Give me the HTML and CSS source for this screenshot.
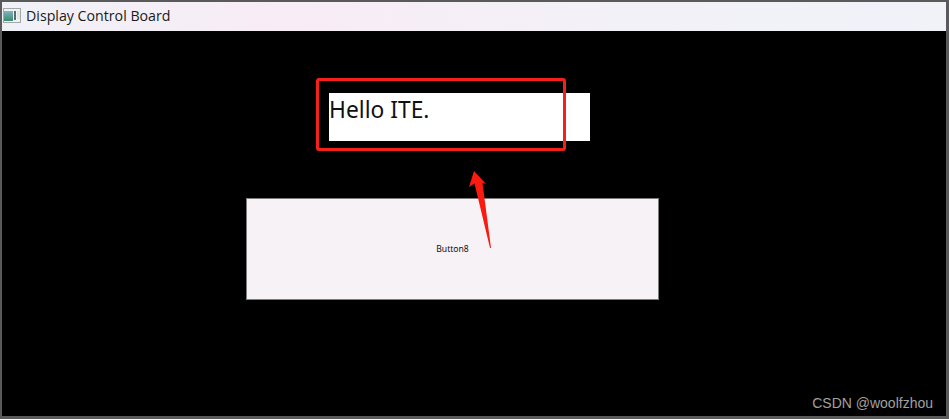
FILE: index.html
```html
<!DOCTYPE html>
<html lang="en">
<head>
<meta charset="utf-8">
<title>Display Control Board</title>
<link rel="stylesheet" href="styles.css">
</head>
<body>
<div class="window">
  <header class="titlebar">
    <svg class="app-icon" width="18" height="15" viewBox="0 0 18 15" aria-hidden="true">
      <defs>
        <linearGradient id="pane" x1="0" y1="0" x2="0" y2="1">
          <stop offset="0" stop-color="#7fb4c0"/>
          <stop offset="1" stop-color="#3a8a6e"/>
        </linearGradient>
      </defs>
      <rect x="0.5" y="0.5" width="17" height="14" fill="#f1f3f3" stroke="#a4a8ac"/>
      <rect x="1" y="3" width="9" height="10" fill="url(#pane)"/>
      <rect x="11" y="3" width="2" height="9" fill="#5a6a76"/>
      <rect x="14" y="3" width="3" height="8" fill="#dde8e6"/>
    </svg>
    <span class="title">Display Control Board</span>
  </header>
  <main class="canvas">
    <div class="label">Hello ITE.</div>
    <button class="push" type="button">Button8</button>
    <div class="mark"></div>
    <svg class="arrow" width="30" height="84" viewBox="0 0 30 84" aria-hidden="true">
      <path d="M9 3 L21 16 L17.500 15 L26 80 L25 80 L9.500 15.500 L4 19 Z" fill="#fb1a10"/>
    </svg>
    <div class="credit">CSDN @woolfzhou</div>
  </main>
</div>
</body>
</html>
```
FILE: styles.css
```css
html, body {
  margin: 0;
  padding: 0;
  height: 100%;
  overflow: hidden;
  background: #000;
}
.window {
  box-sizing: border-box;
  width: 949px;
  height: 419px;
  display: flex;
  flex-direction: column;
  border: solid #5a5a5a;
  border-width: 2px 3px 3px 2px;
  font-family: "Noto Sans", "Open Sans", sans-serif;
}
.titlebar {
  height: 29px;
  flex: none;
  display: flex;
  align-items: center;
  gap: 5px;
  padding: 0 0 1px 1px;
  box-sizing: border-box;
  background: linear-gradient(90deg, #f0f1f7 0%, #f8ecf6 30%, #f3f1f8 65%, #f0f2f8 100%);
}
.app-icon {
  flex: none;
  margin-bottom: 2px;
}
.title {
  font-family: "Open Sans", "Noto Sans", sans-serif;
  font-size: 14.200px;
  color: #1a1a1a;
  margin-bottom: 2px;
}
.canvas {
  position: relative;
  flex: 1;
  background: #000;
  display: flex;
  flex-direction: column;
  align-items: flex-start;
  padding: 62px 0 0 244px;
}
.label {
  box-sizing: border-box;
  width: 261px;
  height: 48px;
  margin-left: 83px;
  background: #fff;
  color: #111;
  font-family: "Noto Sans", sans-serif;
  font-size: 22.800px;
  line-height: 33px;
}
.push {
  box-sizing: border-box;
  width: 413px;
  height: 102px;
  margin-top: 57px;
  padding: 0 0 1px;
  background: #f6f2f6;
  border: 1px solid #7d7d7d;
  border-radius: 0;
  color: #111;
  font-family: "Noto Sans", sans-serif;
  font-size: 8.600px;
}
.mark {
  position: absolute;
  left: 314px;
  top: 47px;
  width: 250px;
  height: 73px;
  box-sizing: border-box;
  border: 3px solid #f5201a;
  border-radius: 3px;
}
.arrow {
  position: absolute;
  left: 463px;
  top: 137px;
}
.credit {
  position: absolute;
  right: 13px;
  bottom: 5px;
  font-family: "Liberation Sans", sans-serif;
  font-size: 14px;
  color: #a0a0a0;
}
```
